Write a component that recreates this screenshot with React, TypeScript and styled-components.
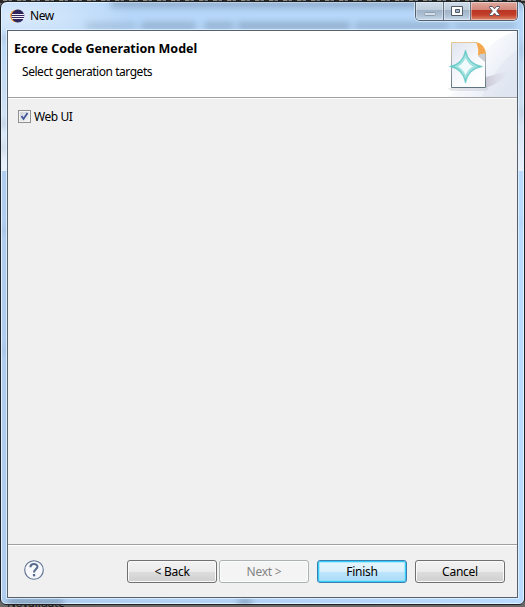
import React from "react";
import styled, { createGlobalStyle, css } from "styled-components";

const Global = createGlobalStyle`
  * { box-sizing: border-box; }
  html, body { margin: 0; padding: 0; overflow: hidden; }
  body { font: 12px/16px "Noto Sans", "Open Sans", sans-serif; color: #000; }
`;

const Desktop = styled.div`
  position: relative;
  width: 525px;
  height: 607px;
  overflow: hidden;
  background: linear-gradient(#2a2828 0 3px, #6b6868 3px);
`;

const TopPattern = styled.div`
  position: absolute;
  inset: 0 0 auto 0;
  height: 1px;
  background: repeating-linear-gradient(90deg, #2b2723 0 3px, #8b8a85 3px 7px, #51483f 7px 9px, #77818a 9px 12px, #222 12px 14px);
`;

const Behind = styled.div`
  position: absolute;
  left: 7px;
  top: 597px;
  font-size: 11.5px;
  line-height: 12px;
  color: #151313;
`;

const Frame = styled.div`
  position: absolute;
  left: 0;
  top: 1px;
  width: 525px;
  height: 604px;
  border: 1px solid #1d2229;
  border-radius: 7px 7px 6px 6px;
  overflow: hidden;
  padding: 0 6px 6px;
  display: flex;
  flex-direction: column;
  background:
    linear-gradient(90deg, #b0cdef, #b8dbff) 0 169px / 100% 100% no-repeat,
    radial-gradient(ellipse 110px 34px at 20px 14px, rgba(226, 238, 251, 0.85), rgba(226, 238, 251, 0)) no-repeat,
    linear-gradient(#b6d7fa 0, #b9d8f8 40px, #c9ddf2 90px, #e9f0fa 168px);
  box-shadow: inset 0 0 0 1px #e4f2ff;
`;

const Smudge = styled.div<{ $x: number; $y: number; $w: number; $h: number; $o: number }>`
  position: absolute;
  left: ${p => p.$x}px;
  top: ${p => p.$y}px;
  width: ${p => p.$w}px;
  height: ${p => p.$h}px;
  background: rgba(72, 96, 122, ${p => p.$o});
  filter: blur(3px);
`;

const TitleBar = styled.header`
  position: relative;
  height: 28px;
  flex: none;
  display: flex;
  align-items: flex-start;
`;

const TitleIcon = styled.svg`
  margin: 7px 5px 0 3px;
  flex: none;
`;

const Title = styled.span`
  margin-top: 6px;
  flex: 1;
  letter-spacing: -0.4px;
`;

const Controls = styled.div`
  display: flex;
  height: 19px;
  border: 1px solid #525f70;
  border-top: 0;
  border-radius: 0 0 5px 5px;
  overflow: hidden;
  box-shadow: 0 0 0 1px rgba(235, 246, 255, 0.6);
`;

const Control = styled.button<{ $w: number; $close?: boolean }>`
  width: ${p => p.$w}px;
  padding: 0;
  border: 0;
  border-right: ${p => (p.$close ? "0" : "1px solid #627184")};
  display: block;
  line-height: 0;
  background: ${p => p.$close
    ? "linear-gradient(#e0aaa0 0, #d18578 8px, #b93423 8px, #c4402a 13px, #df8b6e 18px)"
    : "linear-gradient(#d0dce9 0, #bfcddc 8px, #9fb1c5 8px, #adc0d4 13px, #c7daeb 18px)"};
  box-shadow: inset 0 0 0 1px rgba(255, 255, 255, 0.38);
`;

const Client = styled.main`
  position: relative;
  flex: 1;
  border: 1px solid #56616d;
  box-shadow: 0 0 0 1px rgba(230, 244, 255, 0.75);
  background: #f0f0f0;
  display: flex;
  flex-direction: column;
`;

const Banner = styled.section`
  height: 68px;
  flex: none;
  display: flex;
  justify-content: space-between;
  background: #fff;
  border-bottom: 1px solid #fff;
  box-shadow: inset 0 -1px #a0a0a0;
`;

const BannerText = styled.div`
  padding: 10px 0 0 6px;
`;

const Heading = styled.h1`
  margin: 0;
  font-size: 12.5px;
  line-height: 16px;
  font-weight: 700;
  letter-spacing: -0.02px;
`;

const Description = styled.p`
  margin: 7px 0 0 8px;
  letter-spacing: -0.46px;
`;

const Body = styled.section`
  flex: 1;
  padding: 10px 10px;
`;

const CheckLabel = styled.label`
  display: flex;
  align-items: flex-start;
  gap: 3px;
  height: 16px;
  line-height: 15px;
  letter-spacing: -0.45px;
`;

const CheckBox = styled.span`
  width: 13px;
  height: 13px;
  margin-top: 1px;
  border: 1px solid #8e8f8f;
  background: linear-gradient(135deg, #cdd2d8, #f5f6f7);
  box-shadow: inset 0 0 0 1px #f4f4f4;
  line-height: 0;
`;

const Footer = styled.footer`
  height: 53px;
  flex: none;
  border-top: 1px solid #a0a0a0;
  box-shadow: inset 0 1px #fff;
  padding: 15px 12px 0 16px;
  display: flex;
  align-items: flex-start;
`;

const Help = styled.svg`
  flex: none;
  margin-right: auto;
`;

type Kind = "normal" | "disabled" | "primary";

const kinds = {
  normal: css`
    border-color: #707070;
    background: linear-gradient(#f2f2f2 0, #ebebeb 50%, #dddddd 50%, #cfcfcf 100%);
    box-shadow: inset 0 0 0 1px #fafafa;
  `,
  disabled: css`
    border-color: #adb2b5;
    background: #f4f4f4;
    color: #838383;
    box-shadow: inset 0 0 0 1px #fcfcfc;
  `,
  primary: css`
    border-color: #3c7fb1;
    background: linear-gradient(#e6f5fd 0, #d9f0fc 50%, #bee6fd 50%, #a9dbf5 100%);
    box-shadow: inset 0 0 0 1px #35cdf7, inset 0 0 0 2px rgba(132, 224, 252, 0.55);
  `,
};

const Button = styled.button<{ $kind: Kind; $gap: number }>`
  width: 90px;
  height: 23px;
  margin-left: ${p => p.$gap}px;
  padding: 1px 0 0;
  border: 1px solid;
  border-radius: 3px;
  font: inherit;
  letter-spacing: -0.25px;
  color: #000;
  ${p => kinds[p.$kind]}
`;

const smudges = [
  [110, -2, 412, 8, 0.32],
  [85, 20, 50, 8, 0.18],
  [140, 20, 55, 8, 0.3],
  [203, 20, 30, 8, 0.3],
  [237, 20, 112, 8, 0.34],
  [354, 20, 94, 8, 0.28],
  [453, 20, 62, 8, 0.2],
  [0, 32, 7, 8, 0.18],
  [0, 118, 6, 7, 0.2],
  [0, 140, 6, 12, 0.13],
  [0, 225, 6, 6, 0.12],
  [0, 345, 6, 6, 0.1],
  [518, 40, 6, 16, 0.16],
  [518, 105, 6, 12, 0.14],
  [518, 218, 6, 5, 0.1],
  [7, 597, 55, 6, 0.5],
  [237, 597, 14, 6, 0.45],
];

const buttons: { label: string; kind: Kind; gap: number }[] = [
  { label: "< Back", kind: "normal", gap: 0 },
  { label: "Next >", kind: "disabled", gap: 2 },
  { label: "Finish", kind: "primary", gap: 8 },
  { label: "Cancel", kind: "normal", gap: 8 },
];

const EclipseIcon = () => (
  <TitleIcon width="15" height="14" viewBox="0 0 15 14">
    <circle cx="6.5" cy="7" r="6.3" fill="#f39a35" />
    <circle cx="7.9" cy="7" r="6.4" fill="#30275d" />
    <path d="M2 5.5h12M1.5 7.5h13M2 9.5h12" stroke="#f4f1fa" strokeWidth="1" />
  </TitleIcon>
);

const BannerArt = () => (
  <svg width="75" height="66" viewBox="0 0 75 66">
    <defs>
      <linearGradient id="sweep" x1="0.1" y1="0.1" x2="1" y2="0.7">
        <stop offset="0.25" stopColor="#fff" />
        <stop offset="0.65" stopColor="#f0f3f9" />
        <stop offset="1" stopColor="#e2e8f2" />
      </linearGradient>
      <linearGradient id="page" x1="0" y1="0" x2="0.7" y2="1">
        <stop offset="0" stopColor="#dfe4ee" />
        <stop offset="0.7" stopColor="#fafbfd" />
        <stop offset="1" stopColor="#fff" />
      </linearGradient>
      <linearGradient id="edge" x1="0" y1="0" x2="0" y2="1">
        <stop offset="0" stopColor="#e4c894" />
        <stop offset="0.5" stopColor="#9aa6b0" />
        <stop offset="1" stopColor="#60747f" />
      </linearGradient>
      <linearGradient id="shade" x1="0" y1="0" x2="1" y2="0">
        <stop offset="0" stopColor="#c8c6d3" />
        <stop offset="1" stopColor="#e4e6ef" stopOpacity="0" />
      </linearGradient>
    </defs>
    <path d="M75 0C60 4 50 12 42 22C30 44 18 60 5 66H75Z" fill="url(#sweep)" />
    <path d="M75 20C62 27 50 45 40 66H75Z" fill="#dde4ef" opacity=".5" />
    <path d="M44 46L70 39Q61 51 44 57Z" fill="url(#shade)" />
    <path d="M6 57H47L44 60H9Z" fill="#b8bac5" opacity=".35" />
    <path d="M9.5 11.5H34.5L43.5 22.5V56.5H9.5Z" fill="url(#page)" stroke="url(#edge)" />
    <path d="M34 11Q43 13 44 23Q40 22 36 25Q37 17 34 11Z" fill="#f3a850" />
    <path d="M36 25Q40 22 43 23V31Z" fill="#c9cdd6" />
    <path d="M23.5 19Q26 33 40.5 35.5Q26 38 23.5 52Q21 38 7.5 35.5Q21 33 23.5 19Z" fill="#65c9c7" stroke="#65c9c7" strokeWidth="0.8" />
    <path d="M23.5 23Q27 32 36 35.5Q27 39 23.5 48Q20 39 12 35.5Q20 32 23.5 23Z" fill="#a1e1df" />
    <path d="M23.5 27Q26 33 31 35.5Q26 38 23.5 44Q21 38 16 35.5Q21 33 23.5 27Z" fill="#f2fbfb" />
  </svg>
);

export default function App() {
  return (
    <>
      <Global />
      <Desktop>
        <TopPattern />
        <Behind>Novalidate</Behind>
        <Frame>
          {smudges.map(([x, y, w, h, o]) => (
            <Smudge key={`${x}-${y}`} $x={x} $y={y} $w={w} $h={h} $o={o} />
          ))}
          <TitleBar>
            <EclipseIcon />
            <Title>New</Title>
            <Controls>
              <Control $w={28} aria-label="Minimize">
                <svg width="27" height="18"><rect x="8.5" y="10.5" width="11" height="3" rx="1" fill="#d5dfe9" stroke="#8d9caf" /></svg>
              </Control>
              <Control $w={27} aria-label="Maximize">
                <svg width="26" height="18">
                  <path d="M7.5 4.5h11v9h-11zM11.5 7.5v3h4v-3z" fill="#fff" fillRule="evenodd" stroke="#505968" />
                </svg>
              </Control>
              <Control $w={46} $close aria-label="Close">
                <svg width="46" height="18">
                  <path d="M18.5 4.5h3l2 2.3 2-2.3h3v1l-2.8 3.5 2.8 3.5v1h-3l-2-2.3-2 2.3h-3v-1l2.8-3.5-2.8-3.5z" fill="#fff" stroke="#5a5562" />
                </svg>
              </Control>
            </Controls>
          </TitleBar>
          <Client>
            <Banner>
              <BannerText>
                <Heading>Ecore Code Generation Model</Heading>
                <Description>Select generation targets</Description>
              </BannerText>
              <BannerArt />
            </Banner>
            <Body>
              <CheckLabel>
                <CheckBox role="checkbox" aria-checked="true">
                  <svg width="11" height="11"><path d="M2.5 5L4.5 8L8.5 2" fill="none" stroke="#42569b" strokeWidth="1.8" /></svg>
                </CheckBox>
                Web UI
              </CheckLabel>
            </Body>
            <Footer>
              <Help width="20" height="20" viewBox="0 0 20 20">
                <circle cx="10" cy="10" r="9.3" fill="#f6f8fb" stroke="#5d7191" strokeWidth="1.1" />
                <path d="M6.4 7.2C6.6 2.9 13.6 3.1 13.4 6.9C13.2 9.4 10 9.4 10 12.6" fill="none" stroke="#566b8e" strokeWidth="2.1" />
                <rect x="8.9" y="14" width="2.3" height="2.3" fill="#566b8e" />
              </Help>
              {buttons.map(b => (
                <Button key={b.label} $kind={b.kind} $gap={b.gap} disabled={b.kind === "disabled"}>{b.label}</Button>
              ))}
            </Footer>
          </Client>
        </Frame>
      </Desktop>
    </>
  );
}
